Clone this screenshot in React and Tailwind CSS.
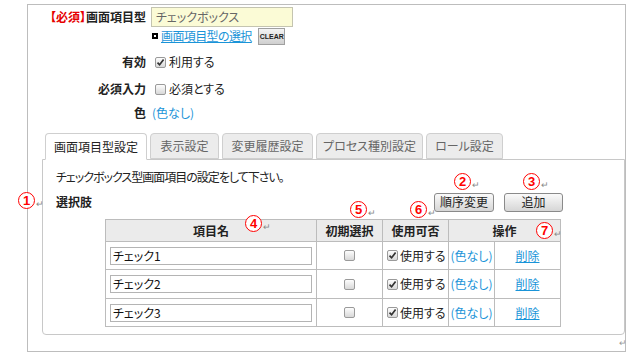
import React from 'react';

const font = "[font-family:'Noto_Sans_CJK_JP','Noto_Sans',sans-serif] [font-feature-settings:'palt']";

// 丸数字の注記（Wordの段落記号つき）
const Mark = ({ n, x, y }) => (
  <div className="absolute flex items-end" style={{ left: x, top: y }}>
    <span className="w-[17px] h-[17px] rounded-full border-[1.5px] border-[#f00] flex items-center justify-center text-[#f00] text-[13px] font-bold leading-none [font-family:'Liberation_Sans',sans-serif] bg-white">
      {n}
    </span>
    <span className="text-[9px] leading-none text-[#888] ml-[1px] mb-[1px]">↵</span>
  </div>
);

const Check = ({ checked }) => (
  <span className="inline-flex w-[11px] h-[11px] shrink-0 rounded-[2px] border border-[#9a9a9a] bg-gradient-to-b from-[#fdfdfd] to-[#d8d8d8] items-center justify-center">
    {checked && (
      <svg width="9" height="9" viewBox="0 0 9 9">
        <path d="M1.5 4.6 L3.6 6.8 L7.6 1.6" fill="none" stroke="#333" strokeWidth="1.7" />
      </svg>
    )}
  </span>
);

const Tab = ({ label, active, w }) => (
  <div
    className={`h-[26px] rounded-t-[4px] border border-[#cfcfcf] flex items-center justify-center text-[12px] ${
      active ? 'bg-white text-[#222] border-b-white h-[27px] -mb-px relative z-10' : 'bg-[#ececec] text-[#666]'
    }`}
    style={{ width: w }}
  >
    {label}
  </div>
);

const Button = ({ children, w }) => (
  <button
    className="h-[19px] rounded-[3px] border border-[#8a8a8a] bg-gradient-to-b from-[#fafafa] to-[#d6d6d6] text-[12px] text-[#222] flex items-center justify-center"
    style={{ width: w }}
  >
    {children}
  </button>
);

const rows = ['チェック1', 'チェック2', 'チェック3'];

export default function App() {
  return (
    <div className={`relative w-[629px] h-[358px] overflow-hidden bg-white text-[#222] ${font}`}>
      <div className="ml-[27px] mt-[4px] w-[599px] h-[348px] border border-[#bdbdbd]">
        {/* 上部フォーム */}
        <div className="grid grid-cols-[118px_1fr] gap-x-[5px] text-[12px]">
          <div className="mt-[2px] h-[20px] flex items-center justify-end font-bold">
            <span className="text-[#e60000]">【必須】</span>画面項目型
          </div>
          <div className="mt-[2px] h-[20px]">
            <div className="w-[142px] h-[20px] border border-[#c4c4b0] bg-[#fbfbd6] text-[#666] px-[4px] flex items-center">
              チェックボックス
            </div>
          </div>

          <div className="h-[18px]" />
          <div className="h-[18px] flex items-center">
            <span className="ml-[1px] w-[6px] h-[6px] bg-black flex items-center justify-center">
              <span className="w-[2px] h-[2px] bg-white" />
            </span>
            <a className="ml-[3px] text-[#1a94d8] underline tracking-[-0.6px]">画面項目型の選択</a>
            <span className="ml-[6px] w-[27px] h-[17px] border border-[#a0a0a0] bg-gradient-to-b from-[#f4f4f4] to-[#cfcfcf] flex items-center">
              <span className="w-[2px] h-[13px] bg-black" />
              <span className="text-[7px] font-bold leading-none [font-family:'Liberation_Sans',sans-serif] ml-[1px]">CLEAR</span>
            </span>
          </div>

          <div className="mt-[7px] h-[20px] flex items-center justify-end font-bold">有効</div>
          <div className="mt-[7px] h-[20px] flex items-center pl-[4px] gap-[3px]">
            <Check checked />
            <span>利用する</span>
          </div>

          <div className="mt-[7px] h-[20px] flex items-center justify-end font-bold">必須入力</div>
          <div className="mt-[7px] h-[20px] flex items-center pl-[4px] gap-[3px]">
            <Check />
            <span>必須とする</span>
          </div>

          <div className="mt-[4px] h-[20px] flex items-center justify-end font-bold">色</div>
          <div className="mt-[4px] h-[20px] flex items-center pl-[1px] text-[#1a94d8]">(色なし)</div>
        </div>

        {/* タブ */}
        <div className="mt-[10px] ml-[17px] flex gap-[3px] items-end">
          <Tab label="画面項目型設定" active w={102} />
          <Tab label="表示設定" w={69} />
          <Tab label="変更履歴設定" w={91} />
          <Tab label="プロセス種別設定" w={107} />
          <Tab label="ロール設定" w={77} />
        </div>

        <div className="ml-[14px] w-[583px] h-[176px] border border-[#c8c8c8] rounded-b-[4px] text-[12px]">
          <div className="pl-[13px] pt-[9px] h-[25px] flex items-center tracking-[-1px]">
            チェックボックス型画面項目の設定をして下さい。
          </div>
          <div className="mt-[7px] pl-[13px] pr-[61px] h-[20px] flex items-center">
            <span className="font-bold">選択肢</span>
            <div className="ml-auto flex gap-[10px]">
              <Button w={60}>順序変更</Button>
              <Button w={59}>追加</Button>
            </div>
          </div>

          <table className="mt-[7px] ml-[62px] w-[455px] table-fixed border-collapse">
            <colgroup>
              <col className="w-[211px]" />
              <col className="w-[66px]" />
              <col className="w-[66px]" />
              <col className="w-[46px]" />
              <col className="w-[66px]" />
            </colgroup>
            <thead>
              <tr className="h-[22px] bg-[#ebebeb] font-bold">
                <th className="border border-[#bcbcbc]">項目名</th>
                <th className="border border-[#bcbcbc]">初期選択</th>
                <th className="border border-[#bcbcbc]">使用可否</th>
                <th colSpan={2} className="border border-[#bcbcbc]">操作</th>
              </tr>
            </thead>
            <tbody>
              {rows.map((r, i) => (
                <tr key={r} className={i === 1 ? 'h-[29px]' : 'h-[28px]'}>
                  <td className="border border-[#bcbcbc] px-[4px]">
                    <div className="w-[202px] h-[18px] border border-[#b4b4b4] flex items-center pl-[2px] text-[#111]">{r}</div>
                  </td>
                  <td className="border border-[#bcbcbc]">
                    <div className="flex justify-center">
                      <Check />
                    </div>
                  </td>
                  <td className="border border-[#bcbcbc] pl-[4px]">
                    <div className="flex items-center gap-[2px]">
                      <Check checked />
                      <span>使用する</span>
                    </div>
                  </td>
                  <td className="border border-[#bcbcbc] text-[#1a94d8] text-center">(色なし)</td>
                  <td className="border border-[#bcbcbc] text-center">
                    <a className="text-[#1a94d8] underline">削除</a>
                  </td>
                </tr>
              ))}
            </tbody>
          </table>
        </div>
      </div>

      <Mark n="1" x={18} y={192} />
      <Mark n="2" x={454} y={173} />
      <Mark n="3" x={523} y={173} />
      <Mark n="4" x={245} y={215} />
      <Mark n="5" x={350} y={201} />
      <Mark n="6" x={410} y={201} />
      <Mark n="7" x={536} y={222} />
      <span className="absolute left-[619px] top-[338px] text-[9px] leading-none text-[#999]">↵</span>
    </div>
  );
}
